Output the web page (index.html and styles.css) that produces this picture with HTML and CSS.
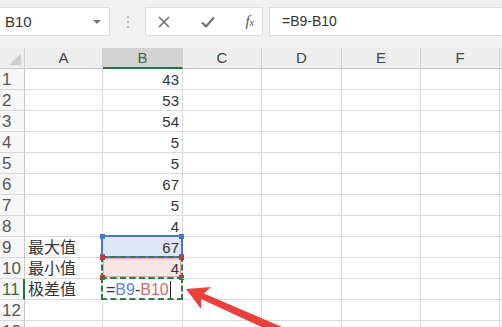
FILE: index.html
```html
<html lang="zh"><head>
    <meta charset="UTF-8">
    <title>极差</title>
    <link rel="stylesheet" href="styles.css">
</head>
<body>
    <div class="toolbar">
        <div class="name-box">
            <span>B10</span>
            <span class="drop"></span>
        </div>
        <div class="grip"><i></i><i></i><i></i></div>
        <div class="fx-box">
            <svg width="14" height="14" viewBox="0 0 14 14"><path d="M2 2 L12 12 M12 2 L2 12" stroke="#6f6f6f" stroke-width="1.6"/></svg>
            <svg width="16" height="14" viewBox="0 0 16 14"><path d="M2 7.5 L6 11.5 L14 2.5" stroke="#6f6f6f" stroke-width="2.2" fill="none"/></svg>
            <span class="fx">f<small>x</small></span>
        </div>
        <div class="formula">=B9-B10</div>
    </div>

    <div class="sheet">
        <div class="hd corner"><span class="tri"></span></div>
        <div class="hd">A</div>
        <div class="hd active">B</div>
        <div class="hd">C</div>
        <div class="hd">D</div>
        <div class="hd">E</div>
        <div class="hd">F</div>
        <div class="hd edge"></div>

        <div class="rh">1</div><div class="c"></div><div class="c num">43</div><div class="c"></div><div class="c"></div><div class="c"></div><div class="c"></div><div class="c edge"></div>
        <div class="rh">2</div><div class="c"></div><div class="c num">53</div><div class="c"></div><div class="c"></div><div class="c"></div><div class="c"></div><div class="c edge"></div>
        <div class="rh">3</div><div class="c"></div><div class="c num">54</div><div class="c"></div><div class="c"></div><div class="c"></div><div class="c"></div><div class="c edge"></div>
        <div class="rh">4</div><div class="c"></div><div class="c num">5</div><div class="c"></div><div class="c"></div><div class="c"></div><div class="c"></div><div class="c edge"></div>
        <div class="rh">5</div><div class="c"></div><div class="c num">5</div><div class="c"></div><div class="c"></div><div class="c"></div><div class="c"></div><div class="c edge"></div>
        <div class="rh">6</div><div class="c"></div><div class="c num">67</div><div class="c"></div><div class="c"></div><div class="c"></div><div class="c"></div><div class="c edge"></div>
        <div class="rh">7</div><div class="c"></div><div class="c num">5</div><div class="c"></div><div class="c"></div><div class="c"></div><div class="c"></div><div class="c edge"></div>
        <div class="rh">8</div><div class="c"></div><div class="c num">4</div><div class="c"></div><div class="c"></div><div class="c"></div><div class="c"></div><div class="c edge"></div>

        <div class="rh">9</div><div class="c label">最大值</div>
        <div class="c num ref-blue">67<span class="box"><i class="tl"></i><i class="tr"></i><i class="bl"></i><i class="br"></i></span></div>
        <div class="c"></div><div class="c"></div><div class="c"></div><div class="c"></div><div class="c edge"></div>

        <div class="rh">10</div><div class="c label">最小值</div>
        <div class="c num ref-red">4<span class="box"><i class="tl"></i><i class="tr"></i><i class="bl"></i><i class="br"></i></span></div>
        <div class="c"></div><div class="c"></div><div class="c"></div><div class="c"></div><div class="c edge"></div>

        <div class="rh cur">11</div><div class="c label">极差值</div>
        <div class="c editing">=<span class="blue">B9</span>-<span class="red">B10</span><span class="caret"></span><span class="box"></span></div>
        <div class="c"></div><div class="c"></div><div class="c"></div><div class="c"></div><div class="c edge"></div>

        <div class="rh">12</div><div class="c"></div><div class="c"></div><div class="c"></div><div class="c"></div><div class="c"></div><div class="c"></div><div class="c edge"></div>
        <div class="rh">13</div><div class="c"></div><div class="c"></div><div class="c"></div><div class="c"></div><div class="c"></div><div class="c"></div><div class="c edge"></div>
    </div>

    <svg class="arrow" width="502" height="327" viewBox="0 0 502 327">
        <polygon points="186,289 211,287 204,293.5 282,327 279,335 201,299 201,309" fill="#e9403b"/>
    </svg>
</body></html>
```

FILE: styles.css
```css
body {
    margin: 0;
    width: 502px;
    height: 327px;
    overflow: hidden;
    background: #ffffff;
    font-family: "Liberation Sans", "Noto Sans CJK SC", sans-serif;
    color: #333;
    position: relative;
}
.toolbar {
    height: 48px;
    background: #f1f1f1;
    display: flex;
    align-items: flex-start;
    padding-top: 7px;
    box-sizing: border-box;
}
.name-box {
    width: 110px;
    height: 29px;
    background: #fff;
    border: 1px solid #dcdcdc;
    border-left: none;
    box-sizing: border-box;
    display: flex;
    align-items: center;
    justify-content: space-between;
    padding: 0 8px 0 5px;
    font-size: 15px;
    color: #333;
}
.drop {
    width: 0;
    height: 0;
    border-left: 4px solid transparent;
    border-right: 4px solid transparent;
    border-top: 4px solid #777;
}
.grip {
    width: 35px;
    height: 29px;
    display: flex;
    flex-direction: column;
    align-items: center;
    justify-content: center;
    gap: 3px;
}
.grip i {
    width: 2px;
    height: 2px;
    background: #b5b5b5;
}
.fx-box {
    width: 118px;
    height: 29px;
    background: #fff;
    border: 1px solid #dcdcdc;
    box-sizing: border-box;
    display: flex;
    align-items: center;
    justify-content: space-between;
    padding: 0 8px 0 11px;
}
.fx {
    font-family: "Liberation Serif", serif;
    font-style: italic;
    font-size: 15px;
    color: #555;
}
.fx small {
    font-size: 10px;
}
.formula {
    flex: 1;
    margin-left: 6px;
    height: 29px;
    background: #fff;
    border: 1px solid #dcdcdc;
    border-right: none;
    box-sizing: border-box;
    padding-left: 12px;
    font-size: 14px;
    line-height: 27px;
    color: #333;
}
.sheet {
    display: grid;
    grid-template-columns: 25px 78px 80px 79px 80px 79px 79px 2px;
    grid-auto-rows: 21px;
}
.hd {
    background: #eeeeee;
    border-right: 1px solid #d0d0d0;
    border-bottom: 1px solid #c8c8c8;
    box-sizing: border-box;
    text-align: center;
    font-size: 15px;
    line-height: 20px;
    color: #444;
}
.hd.active {
    background: #d3d3d3;
    border-bottom: 2px solid #217346;
    color: #3c6b4a;
}
.corner {
    position: relative;
}
.tri {
    position: absolute;
    right: 3px;
    bottom: 3px;
    width: 0;
    height: 0;
    border-left: 12px solid transparent;
    border-bottom: 12px solid #cfcfcf;
}
.rh {
    background: #f7f7f7;
    border-right: 1px solid #c8c8c8;
    border-bottom: 1px solid #d8d8d8;
    box-sizing: border-box;
    padding-left: 2px;
    font-size: 17px;
    line-height: 21px;
    color: #555;
}
.rh.cur {
    border-right: 2px solid #217346;
    color: #3c6b4a;
}
.c {
    border-right: 1px solid #dadada;
    border-bottom: 1px solid #dadada;
    box-sizing: border-box;
    font-size: 15px;
    line-height: 21px;
    position: relative;
}
.edge {
    border-right: none;
}
.num {
    text-align: right;
    padding-right: 3px;
}
.label {
    font-size: 16px;
    padding-left: 3px;
    color: #333;
}
.ref-blue {
    background: #dfe7f6;
}
.ref-red {
    background: #f8e6e6;
}
.box {
    position: absolute;
    left: -2px;
    top: -2px;
    right: -1px;
    bottom: -1px;
    box-sizing: border-box;
}
.ref-blue .box {
    border: 2px solid #4a78c9;
}
.ref-red .box {
    border: 2px dashed #2e7d45;
    outline: 1px solid rgba(200, 60, 60, 0.35);
    outline-offset: -3px;
}
.editing .box {
    border: 2px dashed #2e7d45;
}
.box i {
    position: absolute;
    width: 5px;
    height: 5px;
}
.ref-blue .box i { background: #4a78c9; }
.ref-red .box i { background: #c0393d; }
.tl { left: -3px; top: -3px; }
.tr { right: -3px; top: -3px; }
.bl { left: -3px; bottom: -3px; }
.br { right: -3px; bottom: -3px; }
.editing {
    font-size: 16px;
    padding-left: 3px;
    color: #333;
}
.blue { color: #5b86d0; }
.red { color: #d6686a; }
.caret {
    display: inline-block;
    width: 1px;
    height: 17px;
    background: #222;
    vertical-align: -3px;
    margin-left: 1px;
}
.arrow {
    position: absolute;
    left: 0;
    top: 0;
}
```
